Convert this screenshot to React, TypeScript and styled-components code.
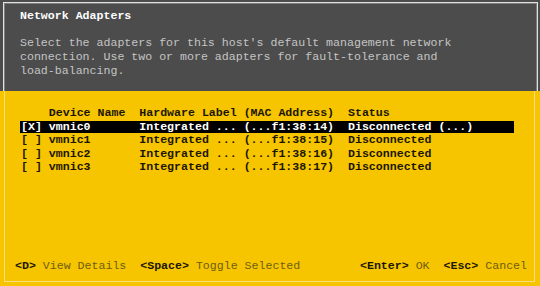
import React from 'react';
import styled, { createGlobalStyle } from 'styled-components';

const GlobalStyle = createGlobalStyle`
  html, body {
    margin: 0;
    padding: 0;
    background: #f6c500;
  }
  #root {
    width: 540px;
    height: 286px;
  }
`

const Screen = styled.div`
  display: flex;
  flex-flow: column nowrap;
  width: 540px;
  height: 286px;
  overflow: hidden;
  font-family: "Liberation Mono", "DejaVu Sans Mono", monospace;
  font-size: 11.6px;
  line-height: 14px;
  white-space: pre;
`

const TopSection = styled.div`
  background: #4c4c4c;
  padding: 2px 2px 0 3px;
`

const Frame = styled.div`
  height: 89px;
  box-sizing: border-box;
  border: 1px solid #e2e2e2;
  border-bottom: none;
  box-shadow: inset 1px 1px 0 #7c7c7c, inset -1px 0 0 #7c7c7c;
  padding: 5.5px 0 0 16px;
`

const Title = styled.div`
  color: #ffffff;
  font-weight: bold;
`

const Description = styled.div`
  margin-top: 13.5px;
  color: #c4c4c4;
`

const BottomSection = styled.div`
  flex: 1;
  display: flex;
  background: #f6c500;
  padding: 0 5px 4px 4px;
`

const Panel = styled.div`
  flex: 1;
  display: flex;
  flex-flow: column nowrap;
  border: 1px solid #fbe07c;
  border-top: none;
  padding: 14.5px 7px 8px 10px;
`

const Table = styled.div`
  margin-left: 5px;
  display: flex;
  flex-flow: column nowrap;
`

const Row = styled.div<{ $header?: boolean; $selected?: boolean }>`
  display: grid;
  grid-template-columns: 4ch 13ch 30ch auto;
  width: 71ch;
  height: ${p => (p.$header ? '14px' : '13.6px')};
  line-height: 14px;
  font-weight: bold;
  color: ${p => (p.$selected ? '#ffffff' : '#1c1600')};
  background: ${p =>
    p.$selected
      ? 'linear-gradient(to bottom, transparent 1.2px, #000 1.2px, #000 13.2px, transparent 13.2px)'
      : 'transparent'};
`

const Cell = styled.span`
  padding-left: 1px;
`

const Footer = styled.div`
  margin-top: auto;
  display: flex;
  justify-content: space-between;
`

const Group = styled.div`
  display: flex;
`

const Key = styled.span`
  color: #1c1600;
  font-weight: bold;
`

const Label = styled.span`
  color: #6f5d12;
`

type Adapter = { name: string; mac: string; status: string; selected: boolean };

const adapters: Adapter[] = [
  { name: 'vmnic0', mac: '(...f1:38:14)', status: 'Disconnected (...)', selected: true },
  { name: 'vmnic1', mac: '(...f1:38:15)', status: 'Disconnected', selected: false },
  { name: 'vmnic2', mac: '(...f1:38:16)', status: 'Disconnected', selected: false },
  { name: 'vmnic3', mac: '(...f1:38:17)', status: 'Disconnected', selected: false },
]

const Action: React.FC<{ k: string; label: string; gap?: boolean }> = ({ k, label, gap }) => (
  <>
    <Key>{k}</Key>
    <Label>{' ' + label + (gap ? '  ' : '')}</Label>
  </>
)

export default function App() {
  return (
    <>
      <GlobalStyle />
      <Screen>
        <TopSection>
          <Frame>
            <Title>Network Adapters</Title>
            <Description>
              {"Select the adapters for this host's default management network\n" +
                'connection. Use two or more adapters for fault-tolerance and\n' +
                'load-balancing.'}
            </Description>
          </Frame>
        </TopSection>
        <BottomSection>
          <Panel>
            <Table>
              <Row $header>
                <Cell />
                <Cell>Device Name</Cell>
                <Cell>Hardware Label (MAC Address)</Cell>
                <Cell>Status</Cell>
              </Row>
              {adapters.map(a => (
                <Row key={a.name} $selected={a.selected}>
                  <Cell>{a.selected ? '[X]' : '[ ]'}</Cell>
                  <Cell>{a.name}</Cell>
                  <Cell>{'Integrated ... ' + a.mac}</Cell>
                  <Cell>{a.status}</Cell>
                </Row>
              ))}
            </Table>
            <Footer>
              <Group>
                <Action k="<D>" label="View Details" gap />
                <Action k="<Space>" label="Toggle Selected" />
              </Group>
              <Group>
                <Action k="<Enter>" label="OK" gap />
                <Action k="<Esc>" label="Cancel" />
              </Group>
            </Footer>
          </Panel>
        </BottomSection>
      </Screen>
    </>
  )
}
